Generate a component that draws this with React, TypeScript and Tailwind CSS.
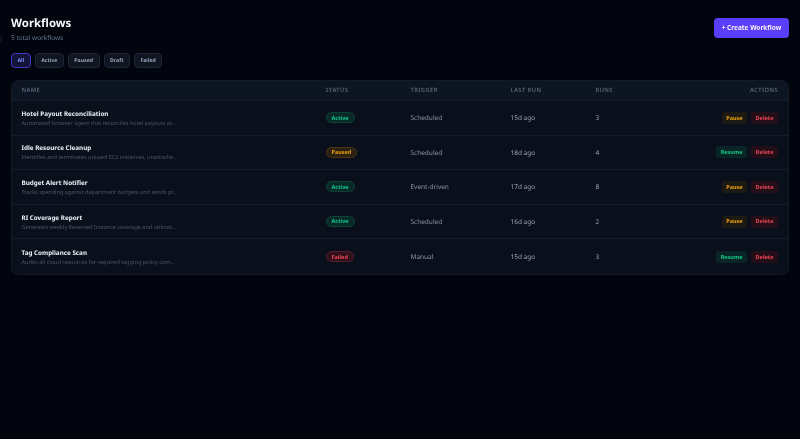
const rows = [
  { name: "Hotel Payout Reconciliation", desc: "Automated browser agent that reconciles hotel payouts ac...", status: "Active", trigger: "Scheduled", last: "15d ago", runs: 3, action: "Pause" },
  { name: "Idle Resource Cleanup", desc: "Identifies and terminates unused EC2 instances, unattache...", status: "Paused", trigger: "Scheduled", last: "18d ago", runs: 4, action: "Resume" },
  { name: "Budget Alert Notifier", desc: "Tracks spending against department budgets and sends pr...", status: "Active", trigger: "Event-driven", last: "17d ago", runs: 8, action: "Pause" },
  { name: "RI Coverage Report", desc: "Generates weekly Reserved Instance coverage and utilizati...", status: "Active", trigger: "Scheduled", last: "16d ago", runs: 2, action: "Pause" },
  { name: "Tag Compliance Scan", desc: "Audits all cloud resources for required tagging policy com...", status: "Failed", trigger: "Manual", last: "15d ago", runs: 3, action: "Resume" },
];

function StatusBadge({ status }: { status: string }) {
  if (status === "Active")
    return <span className="flex h-[11px] items-center rounded-full border border-[#0d4038] bg-[#0a2a28] px-[5px] text-[5.5px] font-bold text-[#10c98a]">Active</span>;
  if (status === "Paused")
    return <span className="flex h-[11px] items-center rounded-full border border-[#4a3612] bg-[#2a2113] px-[5px] text-[5.5px] font-bold text-[#f0a20e]">Paused</span>;
  return <span className="flex h-[11px] items-center rounded-full border border-[#5a1c28] bg-[#2e1119] px-[5px] text-[5.5px] font-bold text-[#f04458]">Failed</span>;
}

function ActionButton({ label }: { label: string }) {
  if (label === "Pause")
    return <span className="flex h-[12px] items-center rounded-[3px] bg-[#1d1a14] px-[4.5px] text-[5.5px] font-bold text-[#f0a20e]">Pause</span>;
  return <span className="flex h-[12px] items-center rounded-[3px] bg-[#0a2526] px-[4.5px] text-[5.5px] font-bold text-[#10c98a]">Resume</span>;
}

export default function App() {
  return (
    <div className="relative flex min-h-[439px] flex-col overflow-hidden bg-[#03050e] px-[11px] pt-[11px] font-['Noto_Sans',sans-serif] [text-rendering:geometricPrecision] [will-change:transform]">
      <div className="absolute top-[35px] left-[-7px] h-[9px] w-[9px] rounded-full border border-[#1c2433]" />
      <div className="flex items-start justify-between">
        <div className="pt-[6px]">
          <h1 className="text-[11.4px] leading-[14px] font-bold text-[#f8fafc]">Workflows</h1>
          <p className="mt-[2px] text-[6.5px] leading-[10px] text-[#64748b]">5 total workflows</p>
        </div>
        <button className="mt-[7px] h-[20px] w-[75px] rounded-[4px] bg-[#5b3ff8] text-[6.5px] font-bold text-[#f1f0ff]">+ Create Workflow</button>
      </div>

      <div className="mt-[10px] flex h-[15px] gap-[4px]">
        <span className="flex items-center rounded-[4px] border border-[#4338ca] bg-[#12143a] px-[5.5px] text-[5.2px] font-bold text-[#818cf8]">All</span>
        {["Active", "Paused", "Draft", "Failed"].map((f) => (
          <span key={f} className="flex items-center rounded-[4px] border border-[#1e2636] bg-[#0f1521] px-[5.5px] text-[5.2px] font-bold text-[#94a3b8]">{f}</span>
        ))}
      </div>

      <div className="mt-[12px] overflow-hidden rounded-[7px] border border-[#131a28] bg-[#0a0f1c]">
        <div className="grid h-[20px] grid-cols-[304px_85px_100px_85px_1fr_auto] items-center border-b border-[#141b29] bg-[#0e1522] pr-[10px] pl-[9.5px] text-[5.8px] font-semibold tracking-[0.4px] text-[#556377]">
          <span>NAME</span>
          <span>STATUS</span>
          <span>TRIGGER</span>
          <span>LAST RUN</span>
          <span>RUNS</span>
          <span>ACTIONS</span>
        </div>
        {rows.map((r, i) => (
          <div key={r.name} className={`grid h-[34.6px] grid-cols-[304px_85px_100px_85px_1fr_auto] items-center pr-[10px] pl-[9.5px] ${i < rows.length - 1 ? "border-b border-[#141b29]" : ""}`}>
            <div>
              <div className="text-[6.3px] leading-[10px] font-bold text-[#eef2f7]">{r.name}</div>
              <div className="text-[5.5px] leading-[8px] text-[#4b5768]">{r.desc}</div>
            </div>
            <div className="flex"><StatusBadge status={r.status} /></div>
            <div className="text-[6.5px] text-[#8b95a5]">{r.trigger}</div>
            <div className="text-[6.5px] text-[#9aa5b4]">{r.last}</div>
            <div className="text-[6.5px] text-[#9aa5b4]">{r.runs}</div>
            <div className="flex gap-[4px]">
              <ActionButton label={r.action} />
              <span className="flex h-[12px] items-center rounded-[3px] bg-[#240f18] px-[4.5px] text-[5.5px] font-bold text-[#f04458]">Delete</span>
            </div>
          </div>
        ))}
      </div>
    </div>
  );
}
